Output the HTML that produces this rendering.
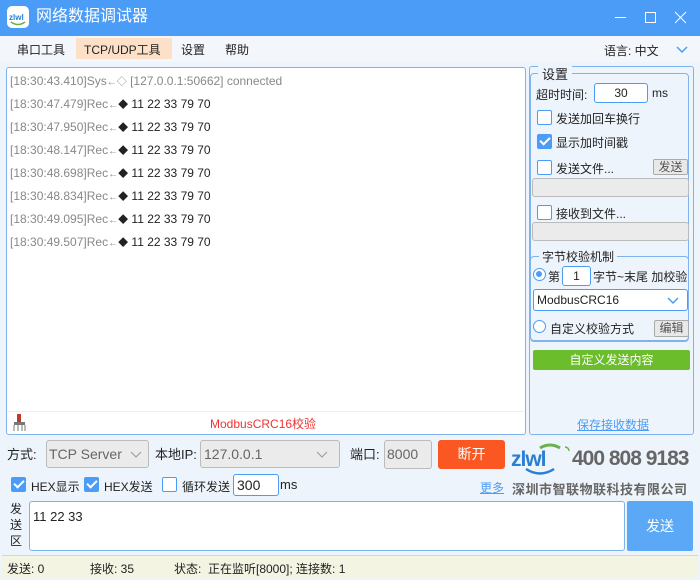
<!DOCTYPE html>
<html><head><meta charset="utf-8"><style>
*{margin:0;padding:0;box-sizing:border-box}
body{width:700px;height:580px;overflow:hidden;background:#eef4fb;font-family:"Liberation Sans","Noto Sans CJK SC",sans-serif;font-size:12px;color:#222;position:relative}
.a{position:absolute}
.cb{position:absolute;width:15px;height:15px;border:1.5px solid #4a9cf6;background:#fff;border-radius:2px}
.cb.on{background:#4a9cf6}
.cb.on:after{content:"";position:absolute;left:4px;top:0px;width:4px;height:8px;border:solid #fff;border-width:0 2px 2px 0;transform:rotate(45deg)}
.inp{position:absolute;background:#fff;border:1px solid #4a9cf6;border-radius:3px}
.gray{position:absolute;background:#ebebeb;border:1px solid #bbb;border-radius:3px}
.btn{position:absolute;background:#e8e8e8;border:1px solid #aaa;border-radius:2px;font-size:12px;color:#555;text-align:center}
.log div{height:23px;line-height:23px;font-size:12px}
.g{color:#888}
.d{font-size:10px;color:#222}
</style></head><body>
<div class="a" style="left:0;top:0;width:700px;height:36px;background:#4a9cf6"></div>
<div class="a" style="left:7px;top:6px;width:22px;height:22px;background:#fff;border-radius:5px"><svg width="22" height="22"><text x="2" y="14" font-size="8" font-weight="bold" fill="#2a7fd4" font-family="Liberation Sans">zlwl</text><path d="M4 16 Q11 21 18 16" stroke="#6ab04c" fill="none" stroke-width="1.5"/></svg></div>
<div class="a" style="left:36px;top:6px;color:#fff;font-size:16px;line-height:22px">网络数据调试器</div>
<div class="a" style="left:615px;top:17px;width:11px;height:1px;background:#fff"></div>
<div class="a" style="left:645px;top:12px;width:11px;height:11px;border:1px solid #fff"></div>
<svg class="a" style="left:674px;top:11px" width="13" height="13"><path d="M1 1L12 12M12 1L1 12" stroke="#fff" stroke-width="1"/></svg>
<div class="a" style="left:0;top:36px;width:700px;height:26px;background:#f3f6fa"></div>
<div class="a" style="left:17px;top:41px;font-size:12px">串口工具</div>
<div class="a" style="left:76px;top:38px;width:96px;height:21px;background:#fde0c8"></div>
<div class="a" style="left:84px;top:41px;font-size:12px">TCP/UDP工具</div>
<div class="a" style="left:181px;top:41px">设置</div>
<div class="a" style="left:225px;top:41px">帮助</div>
<div class="a" style="left:604px;top:42px">语言: 中文</div>
<svg class="a" style="left:676px;top:46px" width="12" height="8"><path d="M1 1L6 6L11 1" stroke="#4a9cf6" fill="none" stroke-width="1.5"/></svg>

<div class="a" style="left:6px;top:67px;width:520px;height:368px;background:#fff;border:1px solid #7fb3ec;border-radius:3px"></div>
<div class="a log" style="left:10px;top:70px">
<div class="g">[18:30:43.410]Sys<span class="d" style="color:#888">←◇</span> [127.0.0.1:50662] connected</div>
<div><span class="g">[18:30:47.479]Rec</span><span class="d"><span style="color:#888">←</span>◆</span> 11 22 33 79 70</div>
<div><span class="g">[18:30:47.950]Rec</span><span class="d"><span style="color:#888">←</span>◆</span> 11 22 33 79 70</div>
<div><span class="g">[18:30:48.147]Rec</span><span class="d"><span style="color:#888">←</span>◆</span> 11 22 33 79 70</div>
<div><span class="g">[18:30:48.698]Rec</span><span class="d"><span style="color:#888">←</span>◆</span> 11 22 33 79 70</div>
<div><span class="g">[18:30:48.834]Rec</span><span class="d"><span style="color:#888">←</span>◆</span> 11 22 33 79 70</div>
<div><span class="g">[18:30:49.095]Rec</span><span class="d"><span style="color:#888">←</span>◆</span> 11 22 33 79 70</div>
<div><span class="g">[18:30:49.507]Rec</span><span class="d"><span style="color:#888">←</span>◆</span> 11 22 33 79 70</div>
</div>
<div class="a" style="left:8px;top:411px;width:516px;height:1px;background:#e6eef8"></div>
<svg class="a" style="left:10px;top:413px" width="20" height="19"><rect x="7" y="1" width="4" height="8" fill="#c0392b"/><rect x="4" y="9" width="11" height="3" fill="#777"/><path d="M4 12V18M8 12V18M12 12V18M15 12V18" stroke="#777"/></svg>
<div class="a" style="left:210px;top:415px;color:#ee3333;font-size:12px">ModbusCRC16校验</div>

<div class="a" style="left:529px;top:66px;width:165px;height:369px;border:1px solid #7fb3ec;border-radius:3px"></div>
<div class="a" style="left:530px;top:73px;width:159px;height:268px;border:1px solid #7fb3ec;border-radius:4px"></div>
<div class="a" style="left:538px;top:64px;background:#eef4fb;padding:0 4px;font-size:13px">设置</div>
<div class="a" style="left:536px;top:86px">超时时间:</div>
<div class="inp" style="left:594px;top:83px;width:54px;height:20px;text-align:center;line-height:18px">30</div>
<div class="a" style="left:652px;top:86px">ms</div>
<div class="cb" style="left:537px;top:110px"></div><div class="a" style="left:556px;top:110px">发送加回车换行</div>
<div class="cb on" style="left:537px;top:134px"></div><div class="a" style="left:556px;top:134px">显示加时间戳</div>
<div class="cb" style="left:537px;top:160px"></div><div class="a" style="left:556px;top:160px">发送文件...</div>
<div class="btn" style="left:653px;top:159px;width:35px;height:16px;line-height:14px">发送</div>
<div class="gray" style="left:532px;top:178px;width:157px;height:19px"></div>
<div class="cb" style="left:537px;top:205px"></div><div class="a" style="left:556px;top:205px">接收到文件...</div>
<div class="gray" style="left:532px;top:222px;width:157px;height:19px"></div>
<div class="a" style="left:530px;top:256px;width:159px;height:86px;border:1px solid #7fb3ec;border-radius:4px"></div>
<div class="a" style="left:539px;top:248px;background:#eef4fb;padding:0 3px">字节校验机制</div>
<div class="a" style="left:533px;top:268px;width:13px;height:13px;border:1.5px solid #4a9cf6;border-radius:50%;background:#fff"><div style="margin:2px;width:6px;height:6px;border-radius:50%;background:#4a9cf6"></div></div>
<div class="a" style="left:548px;top:268px">第</div>
<div class="inp" style="left:562px;top:266px;width:29px;height:20px;text-align:center;line-height:18px">1</div>
<div class="a" style="left:593px;top:268px">字节~末尾 加校验</div>
<div class="inp" style="left:533px;top:289px;width:155px;height:22px;line-height:20px;padding-left:3px">ModbusCRC16</div>
<svg class="a" style="left:667px;top:297px" width="12" height="8"><path d="M1 1L6 6L11 1" stroke="#4a9cf6" fill="none" stroke-width="1.5"/></svg>
<div class="a" style="left:533px;top:320px;width:13px;height:13px;border:1.5px solid #4a9cf6;border-radius:50%;background:#fff"></div>
<div class="a" style="left:550px;top:320px">自定义校验方式</div>
<div class="btn" style="left:654px;top:320px;width:35px;height:17px;line-height:15px">编辑</div>
<div class="a" style="left:533px;top:350px;width:157px;height:20px;background:#6cbd2b;border-radius:2px;color:#fff;text-align:center;line-height:20px">自定义发送内容</div>
<div class="a" style="left:577px;top:416px;color:#4a9cf6;text-decoration:underline">保存接收数据</div>

<div class="a" style="left:7px;top:444px;font-size:13px">方式:</div>
<div class="gray" style="left:46px;top:440px;width:103px;height:28px;line-height:26px;padding-left:2px;font-size:14px;color:#666">TCP Server</div>
<svg class="a" style="left:130px;top:451px" width="12" height="8"><path d="M1 1L6 6L11 1" stroke="#999" fill="none"/></svg>
<div class="a" style="left:155px;top:444px;font-size:13px">本地IP:</div>
<div class="gray" style="left:200px;top:440px;width:140px;height:28px;line-height:26px;padding-left:3px;font-size:14px;color:#666">127.0.0.1</div>
<svg class="a" style="left:316px;top:451px" width="12" height="8"><path d="M1 1L6 6L11 1" stroke="#999" fill="none"/></svg>
<div class="a" style="left:350px;top:444px;font-size:13px">端口:</div>
<div class="gray" style="left:384px;top:440px;width:48px;height:29px;line-height:27px;padding-left:2px;font-size:14px;color:#666">8000</div>
<div class="a" style="left:438px;top:440px;width:67px;height:29px;background:#fb5722;border-radius:3px;color:#fff;text-align:center;line-height:29px;font-size:14px">断开</div>
<svg class="a" style="left:510px;top:442px" width="62" height="34"><path d="M30 6 Q40 0 50 6" stroke="#6ab04c" stroke-width="3" fill="none"/><text x="1" y="24" font-size="21" font-weight="bold" fill="#2a7fd4" font-family="Liberation Sans" letter-spacing="-1">zlwl</text><path d="M16 27 Q30 36 44 27" stroke="#2a7fd4" stroke-width="2.5" fill="none"/><path d="M55 5 a4 4 0 0 1 4 4" stroke="#6ab04c" stroke-width="1.5" fill="none"/></svg>
<div class="a" style="left:572px;top:446px;font-size:21px;font-weight:bold;color:#666;letter-spacing:-1px;line-height:26px">400 808 9183</div>
<div class="cb on" style="left:11px;top:477px"></div><div class="a" style="left:31px;top:478px">HEX显示</div>
<div class="cb on" style="left:84px;top:477px"></div><div class="a" style="left:104px;top:478px">HEX发送</div>
<div class="cb" style="left:162px;top:477px"></div><div class="a" style="left:182px;top:478px">循环发送</div>
<div class="inp" style="left:233px;top:474px;width:46px;height:22px;line-height:20px;padding-left:3px;font-size:14px">300</div>
<div class="a" style="left:280px;top:477px;font-size:13px">ms</div>
<div class="a" style="left:480px;top:479px;color:#4a9cf6;text-decoration:underline">更多</div>
<div class="a" style="left:512px;top:479px;font-size:13px;font-weight:bold;color:#666;letter-spacing:0.5px">深圳市智联物联科技有限公司</div>
<div class="a" style="left:10px;top:501px;width:14px;font-size:12px;line-height:16px">发送区</div>
<div class="inp" style="left:29px;top:501px;width:596px;height:50px;border-color:#7fb3ec;padding:7px 3px;font-size:13px">11 22 33</div>
<div class="a" style="left:627px;top:501px;width:66px;height:50px;background:#5ba8f7;border-radius:2px;color:#fff;text-align:center;line-height:50px;font-size:14px">发送</div>
<div class="a" style="left:2px;top:555px;width:696px;height:23px;background:#f4f4e2;border-top:1px solid #cfd8e0"></div>
<div class="a" style="left:7px;top:560px">发送: 0</div>
<div class="a" style="left:90px;top:560px">接收: 35</div>
<div class="a" style="left:174px;top:560px">状态:&nbsp; 正在监听[8000]; 连接数: 1</div>
</body></html>
